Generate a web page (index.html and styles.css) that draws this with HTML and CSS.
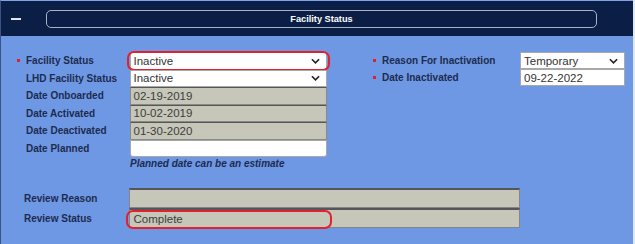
FILE: index.html
```html
<!DOCTYPE html>
<html>
<head>
<meta charset="utf-8">
<link rel="stylesheet" href="styles.css">
</head>
<body>
<div class="panel">
  <div class="header">
    <span class="minus"></span>
    <div class="titlebar">Facility Status</div>
  </div>
  <div class="body">
    <div class="top">
      <div class="col-left">
        <div class="row">
          <div class="lbl"><span class="req"></span>Facility Status</div>
          <div class="field white sel hl">Inactive<svg class="chev" viewBox="0 0 10 6" width="9" height="6"><path d="M1 1 L5 5 L9 1" fill="none" stroke="#222" stroke-width="1.8"/></svg></div>
        </div>
        <div class="row">
          <div class="lbl">LHD Facility Status</div>
          <div class="field white sel">Inactive<svg class="chev" viewBox="0 0 10 6" width="9" height="6"><path d="M1 1 L5 5 L9 1" fill="none" stroke="#222" stroke-width="1.8"/></svg></div>
        </div>
        <div class="row">
          <div class="lbl">Date Onboarded</div>
          <div class="field gray">02-19-2019</div>
        </div>
        <div class="row">
          <div class="lbl">Date Activated</div>
          <div class="field gray">10-02-2019</div>
        </div>
        <div class="row">
          <div class="lbl">Date Deactivated</div>
          <div class="field gray">01-30-2020</div>
        </div>
        <div class="row">
          <div class="lbl">Date Planned</div>
          <div class="field white planned"></div>
        </div>
        <div class="note">Planned date can be an estimate</div>
      </div>
      <div class="col-right">
        <div class="rrow">
          <div class="rlbl"><span class="req"></span>Reason For Inactivation</div>
          <div class="rfield white sel">Temporary<svg class="chev" viewBox="0 0 10 6" width="9" height="6"><path d="M1 1 L5 5 L9 1" fill="none" stroke="#222" stroke-width="1.8"/></svg></div>
        </div>
        <div class="rrow">
          <div class="rlbl"><span class="req"></span>Date Inactivated</div>
          <div class="rfield white">09-22-2022</div>
        </div>
      </div>
    </div>
    <div class="review">
      <div class="vrow">
        <div class="vlbl">Review Reason</div>
        <div class="vfield"></div>
      </div>
      <div class="vrow">
        <div class="vlbl">Review Status</div>
        <div class="vfield status">Complete<span class="hl2"></span></div>
      </div>
    </div>
  </div>
</div>
</body>
</html>
```

FILE: styles.css
```css
* { box-sizing: border-box; }
html, body { margin: 0; padding: 0; }
body {
  background: #dfe8f8;
  font-family: "Liberation Sans", Arial, sans-serif;
  width: 635px;
  height: 244px;
  overflow: hidden;
}
.panel {
  width: 633px;
  border-top: 1px solid #7ea3e6;
  border-left: 1px solid #3a5488;
  background: #6e98e3;
  height: 244px;
}
.header {
  height: 35px;
  background: #0b1e46;
  display: flex;
  align-items: center;
  padding-top: 1px;
}
.minus {
  width: 10px;
  height: 2px;
  background: #dfe6f2;
  margin-left: 10px;
}
.titlebar {
  margin-left: 25px;
  width: 551px;
  height: 18px;
  border: 1.5px solid #a9b3c6;
  border-radius: 5px;
  color: #ffffff;
  font-weight: bold;
  font-size: 9.2px;
  display: flex;
  align-items: center;
  justify-content: center;
}
.body {
  padding-top: 16px;
}
.top {
  display: flex;
}
.col-left {
  width: 372px;
  padding-left: 16px;
}
.row {
  display: flex;
  align-items: center;
  height: 17.5px;
}
.lbl, .rlbl, .vlbl {
  font-size: 10px;
  font-weight: bold;
  color: #1d2b50;
  display: flex;
  align-items: center;
}
.lbl {
  width: 112.5px;
  padding-left: 9px;
  position: relative;
}
.req {
  width: 3px;
  height: 3px;
  background: #e0202a;
  display: inline-block;
  margin-left: -9px;
  margin-right: 6px;
}
.field {
  width: 197px;
  height: 17.5px;
  font-size: 11.5px;
  color: #333;
  padding-left: 3px;
  display: flex;
  align-items: center;
  position: relative;
}
.white {
  background: #ffffff;
  border: 1px solid #a8a8a8;
}
.gray {
  background: #c6c7b9;
  border: 1px solid #8a8a84;
  border-top-color: #55565a;
  color: #3c3c3c;
}
.planned {
  border-radius: 0 0 3px 3px;
}
.sel .chev {
  position: absolute;
  right: 6px;
  top: 50%;
  margin-top: -3px;
}
.hl::after {
  content: "";
  position: absolute;
  left: -3.5px;
  right: -4px;
  top: -2.5px;
  bottom: -2px;
  border: 2.5px solid #e3202e;
  border-radius: 7px;
}
.note {
  font-size: 10px;
  font-weight: bold;
  font-style: italic;
  color: #1d2b50;
  margin-left: 113px;
  margin-top: 1px;
  height: 12px;
  line-height: 12px;
}
.col-right {
  width: 254px;
}
.rrow {
  display: flex;
  align-items: center;
  height: 17px;
}
.rlbl {
  width: 147px;
  padding-left: 9px;
}
.rfield {
  width: 105px;
  height: 17px;
  font-size: 11.5px;
  color: #333;
  padding-left: 3px;
  display: flex;
  align-items: center;
  position: relative;
}
.review {
  margin-top: 18px;
  padding-left: 23px;
}
.vrow {
  display: flex;
  align-items: center;
  height: 20px;
}
.vlbl {
  width: 104.5px;
}
.vfield {
  width: 391px;
  height: 20px;
  background: #c6c7b9;
  border: 1px solid #84858a;
  border-top: 2px solid #55565c;
  font-size: 11.5px;
  color: #3c3c3c;
  padding-left: 4px;
  display: flex;
  align-items: center;
  position: relative;
}
.hl2 {
  position: absolute;
  left: -3.5px;
  top: 0px;
  width: 206px;
  height: 19px;
  border: 2.5px solid #e3202e;
  border-radius: 7px;
}
```
